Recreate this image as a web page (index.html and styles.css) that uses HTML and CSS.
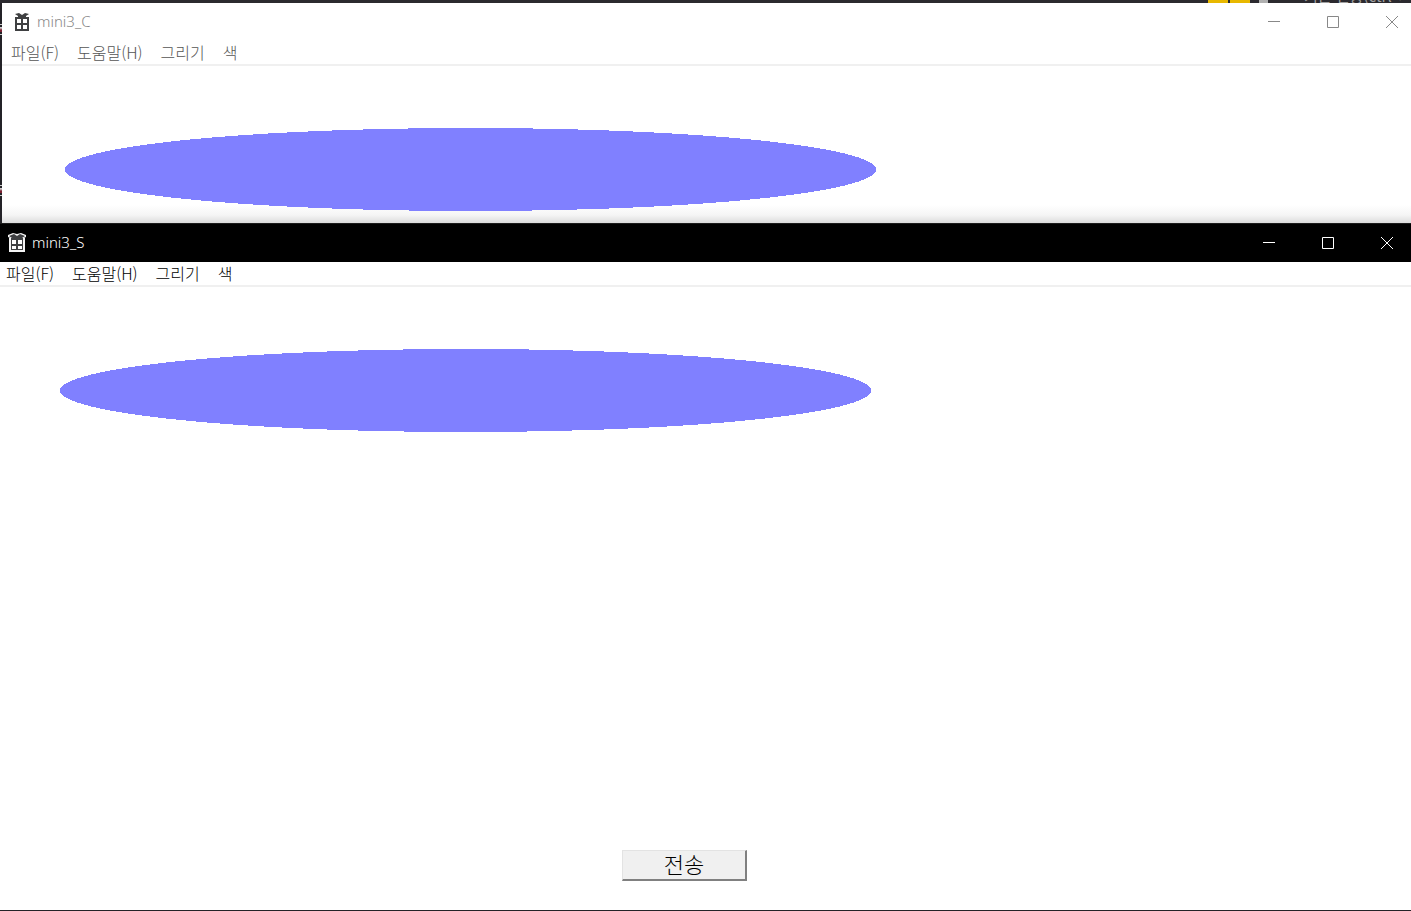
FILE: index.html
```html
<!DOCTYPE html>
<html lang="ko">
<head>
<meta charset="utf-8">
<title>mini3</title>
<link rel="stylesheet" href="styles.css">
</head>
<body>
<div class="desktop">
  <div class="backdrop" aria-hidden="true">
    <span class="tab"></span><span class="tab"></span><span class="chip"></span>
    <span class="caption">기는 전송(ctrl +</span>
  </div>

  <section class="window window-client">
    <header class="titlebar">
      <svg class="app-icon" viewBox="0 0 20 20" aria-hidden="true">
        <path fill="#3f4042" d="M3 3l4-1 3 2 3-2 4 1-3 2v1h3v14H3V6h3V5z"/>
        <path fill="#fff" d="M5 8h4v4H5zM11 8h4v4h-4zM5 14h4v4H5zM11 14h4v4h-4z"/>
      </svg>
      <h1 class="title">mini3_C</h1>
      <div class="controls">
        <button class="control" aria-label="최소화"><svg class="glyph" viewBox="0 0 12 12"><path d="M0 5.5h12"/></svg></button>
        <button class="control" aria-label="최대화"><svg class="glyph" viewBox="0 0 12 12"><path d="M.5.5h11v11H.5z"/></svg></button>
        <button class="control" aria-label="닫기"><svg class="glyph" viewBox="0 0 12 12"><path d="M0 0l12 12M12 0L0 12"/></svg></button>
      </div>
    </header>
    <nav class="menubar">
      <button class="menu">파일(F)</button>
      <button class="menu">도움말(H)</button>
      <button class="menu">그리기</button>
      <button class="menu">색</button>
    </nav>
    <main class="canvas">
      <svg class="drawing" viewBox="0 0 811 83" shape-rendering="crispEdges"><ellipse cx="405.5" cy="41.5" rx="405.5" ry="41.5"/></svg>
    </main>
  </section>

  <section class="window window-server">
    <header class="titlebar">
      <svg class="app-icon" viewBox="0 0 20 20" aria-hidden="true">
        <path fill="#f4f4f4" d="M1 3l5-2 4 1 4-1 5 2v2l-2 1h1v14H2V6h1L1 5z"/>
        <path fill="#3f4042" d="M2 4l5-2 3 2 3-2 5 2-3 2h1v12H4V6h1z"/>
        <path fill="#fff" d="M5 8h4v4H5zM11 8h4v4h-4zM5 14h4v3H5zM11 14h4v3h-4z"/>
      </svg>
      <h1 class="title">mini3_S</h1>
      <div class="controls">
        <button class="control" aria-label="최소화"><svg class="glyph" viewBox="0 0 12 12"><path d="M0 5.5h12"/></svg></button>
        <button class="control" aria-label="최대화"><svg class="glyph" viewBox="0 0 12 12"><path d="M.5.5h11v11H.5z"/></svg></button>
        <button class="control" aria-label="닫기"><svg class="glyph" viewBox="0 0 12 12"><path d="M0 0l12 12M12 0L0 12"/></svg></button>
      </div>
    </header>
    <nav class="menubar">
      <button class="menu">파일(F)</button>
      <button class="menu">도움말(H)</button>
      <button class="menu">그리기</button>
      <button class="menu">색</button>
    </nav>
    <main class="canvas">
      <svg class="drawing" viewBox="0 0 811 83" shape-rendering="crispEdges"><ellipse cx="405.5" cy="41.5" rx="405.5" ry="41.5"/></svg>
      <div class="actions"><button class="send">전송</button></div>
    </main>
  </section>
</div>
</body>
</html>
```

FILE: styles.css
```css
* { box-sizing: border-box; }

body {
  margin: 0;
  font-family: "Noto Sans CJK KR", sans-serif;
  font-size: 16px;
}

button {
  margin: 0;
  padding: 0;
  border: 0;
  background: none;
  color: inherit;
  font: inherit;
}

.desktop {
  display: flex;
  flex-direction: column;
  min-height: 100vh;
  padding-bottom: 1px;
  background:
    linear-gradient(#ccc 1px, transparent 1px 3px, #ccc 3px 4px, #7a2030 6px 8px, transparent 8px 10px, #ccc 10px) 0 24px / 2px 11px no-repeat,
    linear-gradient(#ccc 1px, transparent 1px 3px, #ccc 3px 4px, #7a2030 6px 8px, transparent 8px 10px, #ccc 10px) 0 185px / 2px 11px no-repeat,
    #232227;
  overflow: hidden;
}

.backdrop {
  display: flex;
  height: 3px;
  padding-left: 1208px;
  overflow: hidden;
  background: #2b2a2f;
}

.tab { flex: none; width: 20px; margin-right: 2px; background: #e8b800; }
.chip { flex: none; width: 9px; margin: 0 36px 0 7px; background: #b0b0b0; }
.caption { flex: none; color: #a0a0a0; font-size: 15px; line-height: 20px; margin-top: -14px; white-space: nowrap; }

.window {
  display: flex;
  flex-direction: column;
  background: #fff;
}

.window-client { margin-left: 2px; color: #555; }
.window-server { flex: 1; color: #000; }

.titlebar {
  display: flex;
  align-items: center;
  height: 38px;
  padding-left: 10px;
}

.window-client .titlebar { color: #888; }

.window-server .titlebar {
  height: 39px;
  padding: 0 5px 0 7px;
  border-top: 1px solid #1c1c1c;
  background: #000;
  color: #fff;
}

.app-icon { width: 20px; height: 20px; margin: 0 5px 2px 0; }

.title {
  margin: 0;
  padding-bottom: 2px;
  font-family: "Noto Sans", sans-serif;
  font-size: 15px;
  font-weight: 300;
  line-height: 20px;
}

.controls { display: flex; gap: 21px; margin-left: auto; }

.control {
  display: flex;
  align-items: center;
  justify-content: center;
  width: 38px;
  height: 38px;
}

.glyph { width: 12px; height: 12px; fill: none; stroke: currentColor; }

.menubar {
  display: flex;
  gap: 18px;
  height: 25px;
  padding-left: 9px;
  border-bottom: 2px solid #f0f0f0;
  font-weight: 300;
  line-height: 23px;
}

.window-server .menubar { padding-left: 6px; }

.canvas {
  display: flex;
  flex: 1;
  flex-direction: column;
  padding: 62px 0 12px 63px;
}

.window-client .canvas {
  background: linear-gradient(to top, #dcdcdc, #f5f5f5 8px, #fff 18px);
}

.window-server .canvas { padding: 62px 0 29px 60px; }

.drawing { width: 811px; fill: #8080ff; }

.actions { display: flex; justify-content: center; margin: auto 42px 0 -60px; }

.send {
  width: 125px;
  height: 31px;
  padding-bottom: 4px;
  border: 1px solid #e3e3e3;
  border-right: 2px solid #808080;
  border-bottom: 2px solid #808080;
  background: #f0f0f0;
  font-size: 22px;
  font-weight: 300;
  line-height: 24px;
}
```
